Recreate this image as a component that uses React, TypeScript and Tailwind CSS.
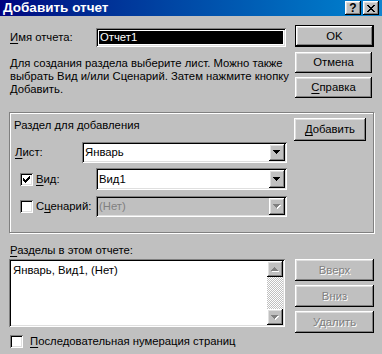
import React from 'react';

const raised =
  'bg-[#c0c0c0] shadow-[inset_-1px_-1px_0_#000,inset_1px_1px_0_#fff,inset_-2px_-2px_0_#808080,inset_2px_2px_0_#dfdfdf]';
const sunken =
  'shadow-[inset_1px_1px_0_#808080,inset_-1px_-1px_0_#fff,inset_2px_2px_0_#000,inset_-2px_-2px_0_#dfdfdf]';
const disabledText = 'text-[#808080] [text-shadow:1px_1px_0_#fff]';

function U({ children }: { children: React.ReactNode }) {
  return <span className="underline underline-offset-[2px] decoration-[1px]">{children}</span>;
}

/* pixel triangle, pointing down or up */
function Tri({ up = false, disabled = false }: { up?: boolean; disabled?: boolean }) {
  const rows = [0, 1, 2, 3].map((i) => ({ x: i, w: 7 - i * 2, y: up ? 3 - i : i }));
  return (
    <svg width="8" height="5" shapeRendering="crispEdges">
      {disabled &&
        rows.map((r, i) => <rect key={'s' + i} x={r.x + 1} y={r.y + 1} width={r.w} height={1} fill="#fff" />)}
      {rows.map((r, i) => (
        <rect key={i} x={r.x} y={r.y} width={r.w} height={1} fill={disabled ? '#808080' : '#000'} />
      ))}
    </svg>
  );
}

function Check() {
  const px: [number, number, number][] = [
    [6, 0, 1],
    [5, 1, 2],
    [0, 2, 1],
    [4, 2, 3],
    [0, 3, 2],
    [3, 3, 3],
    [0, 4, 5],
    [1, 5, 3],
    [2, 6, 1],
  ];
  return (
    <svg width="7" height="7" shapeRendering="crispEdges">
      {px.map(([x, y, w], i) => (
        <rect key={i} x={x} y={y} width={w} height={1} fill="#000" />
      ))}
    </svg>
  );
}

function CheckBox({ checked = false }: { checked?: boolean }) {
  return (
    <div className={`w-[13px] h-[13px] bg-white flex items-center justify-center shrink-0 ${sunken}`}>
      {checked && <Check />}
    </div>
  );
}

function Combo({ value, width, height, disabled = false }: { value: string; width: string; height: string; disabled?: boolean }) {
  return (
    <div className={`${width} ${height} flex items-stretch p-[2px] ${sunken} ${disabled ? 'bg-[#c0c0c0]' : 'bg-white'}`}>
      <div className={`flex-1 flex items-center pl-[1px] ${disabled ? 'text-[#808080]' : ''}`}>{value}</div>
      <div className={`w-[16px] flex items-center justify-center ${raised}`}>
        <Tri disabled={disabled} />
      </div>
    </div>
  );
}

function Btn({ children, className = '', disabled = false }: { children: React.ReactNode; className?: string; disabled?: boolean }) {
  return (
    <div className={`flex items-center justify-center ${raised} ${disabled ? disabledText : ''} ${className}`}>
      {children}
    </div>
  );
}

function CloseGlyph() {
  const rows = [
    [0, 6],
    [1, 5],
    [2, 4],
    [3, 3],
    [2, 4],
    [1, 5],
    [0, 6],
  ];
  return (
    <svg width="8" height="7" shapeRendering="crispEdges">
      {rows.map(([a, b], i) => (
        <g key={i}>
          <rect x={a} y={i} width={2} height={1} fill="#000" />
          <rect x={b} y={i} width={2} height={1} fill="#000" />
        </g>
      ))}
    </svg>
  );
}

export default function App() {
  return (
    <div className="w-[382px] h-[354px] bg-[#c0c0c0] overflow-hidden flex flex-col text-[11.3px] leading-[13px] text-black font-['Liberation_Sans',Arial,sans-serif]">
      {/* Title bar */}
      <div className="h-[16px] shrink-0 flex items-center pl-[3px] pr-[3px] bg-linear-to-r from-[#000080] to-[#1084d0]">
        <span className="text-white font-bold text-[13.5px] leading-[16px]">Добавить отчет</span>
        <div className="ml-auto flex gap-[2px]">
          <div className={`w-[16px] h-[14px] flex items-center justify-center font-bold text-[12px] leading-none pb-[1px] ${raised}`}>?</div>
          <div className={`w-[16px] h-[14px] flex items-center justify-center ${raised}`}>
            <CloseGlyph />
          </div>
        </div>
      </div>

      {/* Name + description + main buttons */}
      <div className="flex pl-[10px] pt-[9px] shrink-0">
        <div className="w-[276px]">
          <div className="mt-[3px] h-[19px] flex items-center">
            <div className="w-[86px]">
              <U>И</U>мя отчета:
            </div>
            <div className={`w-[190px] h-[19px] bg-white p-[3px] pl-[3px] ${sunken}`}>
              <div className="h-full bg-black text-white flex items-center pl-[1px]">Отчет1</div>
            </div>
          </div>
          <div className="mt-[10px] whitespace-nowrap">
            Для создания раздела выберите лист. Можно также
            <br />
            выбрать Вид и/или Сценарий. Затем нажмите кнопку
            <br />
            Добавить.
          </div>
        </div>
        <div className="ml-[9px] w-[79px] flex flex-col">
          <div className="h-[22px] border border-black">
            <Btn className="h-full">OK</Btn>
          </div>
          <Btn className="mt-[5px] h-[21px] w-[77px]">Отмена</Btn>
          <Btn className="mt-[4px] h-[21px] w-[77px]">
            <span>
              <U>С</U>правка
            </span>
          </Btn>
        </div>
      </div>

      {/* Group frame */}
      <div className="mt-[14px] ml-[9px] w-[365px] h-[121px] shrink-0 flex border border-[#808080] shadow-[inset_1px_1px_0_#fff,1px_1px_0_#fff]">
        <div className="w-[277px] pt-[6px] flex flex-col">
          <div className="pl-[4px]">Раздел для добавления</div>
          <div className="mt-[10px] flex items-center">
            <div className="w-[72px] pl-[5px]">
              <U>Л</U>ист:
            </div>
            <Combo value="Январь" width="w-[205px]" height="h-[21px]" />
          </div>
          <div className="mt-[5px] flex items-center">
            <div className="w-[86px] pl-[10px] flex items-center">
              <CheckBox checked />
              <span className="ml-[3px]">
                <U>В</U>ид:
              </span>
            </div>
            <Combo value="Вид1" width="w-[191px]" height="h-[22px]" />
          </div>
          <div className="mt-[6px] flex items-center">
            <div className="w-[86px] pl-[10px] flex items-center">
              <CheckBox />
              <span className="ml-[3px]">
                С<U>ц</U>енарий:
              </span>
            </div>
            <Combo value="(Нет)" width="w-[191px]" height="h-[21px]" disabled />
          </div>
        </div>
        <div className="ml-[7px] pt-[5px]">
          <Btn className="w-[72px] h-[23px]">
            <span>
              <U>Д</U>обавить
            </span>
          </Btn>
        </div>
      </div>

      {/* Sections list */}
      <div className="mt-[11px] pl-[9px] flex shrink-0">
        <div className="w-[276px]">
          <div className="pl-[1px]">
            <U>Р</U>азделы в этом отчете:
          </div>
          <div className={`mt-[2px] h-[68px] bg-white p-[2px] flex ${sunken}`}>
            <div className="flex-1 pl-[2px] pt-[3px]">Январь, Вид1, (Нет)</div>
            <div className="w-[16px] flex flex-col">
              <div className={`h-[16px] flex items-center justify-center ${raised}`}>
                <Tri up disabled />
              </div>
              <div className="flex-1 bg-[image:repeating-conic-gradient(#c0c0c0_0_25%,#fff_0_50%)] bg-[length:2px_2px]" />
              <div className={`h-[16px] flex items-center justify-center ${raised}`}>
                <Tri disabled />
              </div>
            </div>
          </div>
        </div>
        <div className="ml-[10px] w-[79px] pt-[15px] flex flex-col gap-[4px]">
          <Btn className="h-[22px]" disabled>
            Вверх
          </Btn>
          <Btn className="h-[22px]" disabled>
            Вниз
          </Btn>
          <Btn className="h-[22px]" disabled>
            Удалить
          </Btn>
        </div>
      </div>

      {/* Bottom checkbox */}
      <div className="mt-[2px] pl-[10px] flex items-center h-[13px] shrink-0">
        <CheckBox />
        <span className="ml-[7px]">
          <U>П</U>оследовательная нумерация страниц
        </span>
      </div>
    </div>
  );
}
